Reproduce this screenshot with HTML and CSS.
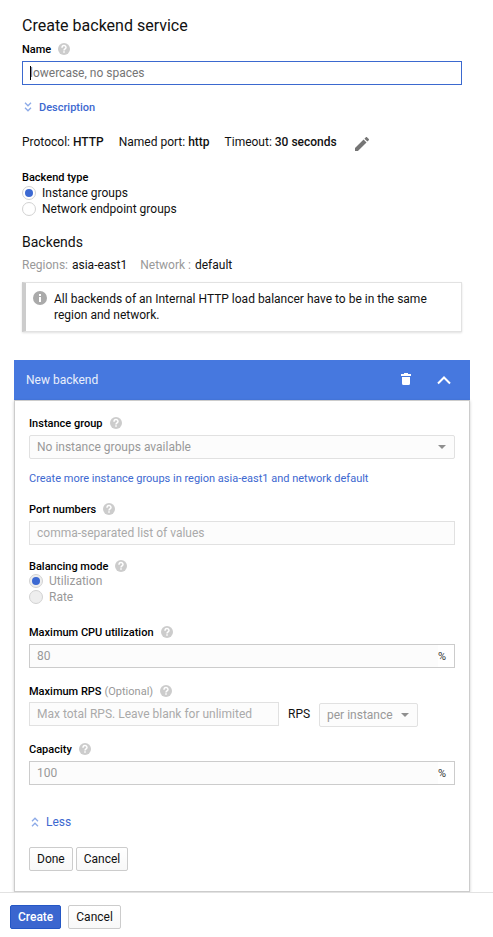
FILE: index.html
```html
<!DOCTYPE html>
<html lang="en">
<head>
<meta charset="utf-8">
<title>Create backend service</title>
<link rel="stylesheet" href="styles.css">
</head>
<body>
<svg class="defs" width="0" height="0" aria-hidden="true">
  <symbol id="help" viewBox="0 0 12 12"><circle cx="6" cy="6" r="6"/><path d="M4 4.700C4 1.900 8 1.900 8 4.500C8 5.800 6 5.900 6 7.400M6 8.300v1.500" fill="none" stroke="#fff" stroke-width="1.500"/></symbol>
</svg>
<main class="page">
  <h1 class="title">Create backend service</h1>
  <div class="label">Name <svg class="help"><use href="#help"/></svg></div>
  <div class="field focused"><span class="caret"></span>lowercase, no spaces</div>
  <a class="toggle description"><svg class="chevrons" viewBox="0 0 8 10"><path d="M1 .8l3 3 3-3M1 5.800l3 3 3-3"/></svg>Description</a>
  <div class="summary">
    <span>Protocol: <b>HTTP</b></span>
    <span>Named port: <b>http</b></span>
    <span>Timeout: <b>30 seconds</b></span>
    <svg class="pencil" viewBox="3 3 18 18"><path d="M3 17.250V21h3.750L17.810 9.940l-3.750-3.750L3 17.250zM20.710 7.040c.39-.39.39-1.020 0-1.410l-2.340-2.340c-.39-.39-1.020-.39-1.410 0l-1.830 1.830 3.750 3.750 1.830-1.830z"/></svg>
  </div>
  <div class="label">Backend type</div>
  <div class="option"><i class="radio on"></i>Instance groups</div>
  <div class="option"><i class="radio"></i>Network endpoint groups</div>
  <h2 class="subtitle">Backends</h2>
  <div class="scope"><span class="muted">Regions:</span><span class="region">asia-east1</span><span class="muted">Network :</span><span>default</span></div>
  <div class="notice">
    <svg class="info" viewBox="0 0 14 14"><circle cx="7" cy="7" r="7"/><path d="M6 3h2v2H6zM6 6h2v5H6z"/></svg>
    <p>All backends of an Internal HTTP load balancer have to be in the same region and network.</p>
  </div>
</main>
<section class="card">
  <header class="card-head">
    <span class="card-title">New backend</span>
    <svg class="trash" viewBox="0 0 10 12"><path d="M0 1h3V0h4v1h3v2H0zM1 4h8v6.500Q9 12 7.500 12h-5Q1 12 1 10.500z"/></svg>
    <svg class="collapse" viewBox="0 0 14 9"><path d="M1 7.500l6-6 6 6"/></svg>
  </header>
  <div class="card-body">
    <div class="label">Instance group <svg class="help"><use href="#help"/></svg></div>
    <div class="field off select">No instance groups available<i class="arrow"></i></div>
    <a class="link">Create more instance groups in region asia-east1 and network default</a>
    <div class="label">Port numbers <svg class="help"><use href="#help"/></svg></div>
    <div class="field off hint">comma-separated list of values</div>
    <div class="label balancing">Balancing mode <svg class="help"><use href="#help"/></svg></div>
    <div class="option disabled"><i class="radio on"></i>Utilization</div>
    <div class="option disabled"><i class="radio"></i>Rate</div>
    <div class="label cpu">Maximum CPU utilization <svg class="help"><use href="#help"/></svg></div>
    <div class="field number"><span class="value">80</span><span class="unit">%</span></div>
    <div class="label rps">Maximum RPS <span class="optional">(Optional)</span> <svg class="help"><use href="#help"/></svg></div>
    <div class="rps-row">
      <div class="field off hint rps-input">Max total RPS. Leave blank for unlimited</div>
      <span class="rps-unit">RPS</span>
      <div class="field off select per">per instance<i class="arrow"></i></div>
    </div>
    <div class="label capacity">Capacity <svg class="help"><use href="#help"/></svg></div>
    <div class="field number"><span class="value">100</span><span class="unit">%</span></div>
    <a class="toggle less"><svg class="chevrons" viewBox="0 0 8 10"><path d="M1 4.200l3-3 3 3M1 9.200l3-3 3 3"/></svg>Less</a>
    <div class="actions"><button class="btn">Done</button><button class="btn">Cancel</button></div>
  </div>
</section>
<footer class="footer"><button class="btn primary">Create</button><button class="btn">Cancel</button></footer>
</body>
</html>
```

FILE: styles.css
```css
* { box-sizing: border-box; }
body {
  margin: 0;
  height: 937px;
  overflow: hidden;
  background: #fff;
  color: #111;
  font: 12px/16px Roboto, "Liberation Sans", sans-serif;
}
.defs { display: none; }
svg { flex: none; }
.page { height: 360px; padding: 16px 31px 0 22px; }
.title { margin: 0 0 5px; font-size: 16px; line-height: 20px; font-weight: 400; }
.subtitle { margin: 15px 0 5px; font-size: 14px; line-height: 20px; font-weight: 400; }
b { font-weight: 500; }
.label { display: flex; align-items: center; height: 16px; padding-top: 1px; color: #000; font-size: 11px; line-height: 16px; font-weight: 500; }
.help { width: 12px; height: 12px; margin: -1px 0 0 7px; fill: #ccc; }
.field {
  display: flex;
  align-items: center;
  height: 24px;
  margin-top: 4px;
  padding: 0 7px;
  border: 1px solid #ccc;
  white-space: nowrap;
}
.focused { position: relative; border-color: #3b69cf; color: #757575; }
.caret { position: absolute; left: 7px; top: 4px; width: 1px; height: 14px; background: #000; }
.toggle { display: flex; align-items: center; color: #3d68d0; }
.chevrons { width: 8px; height: 10px; fill: none; stroke: #8caae8; stroke-width: 1.3; }
.description { margin: 15px 0 18px; padding-left: 2px; gap: 7px; font-size: 11px; font-weight: 500; }
.description .chevrons { margin-bottom: 3px; }
.summary { display: flex; align-items: center; height: 16px; margin-bottom: 19px; gap: 15px; }
.pencil { width: 14px; height: 14px; margin: 3px 0 0 3px; fill: #757575; }
.option { display: flex; align-items: center; height: 16px; gap: 6px; }
.radio { display: flex; flex: none; align-items: center; justify-content: center; width: 14px; height: 14px; border: 1px solid #d2d2d2; border-radius: 50%; }
.radio.on::after { content: ""; width: 8px; height: 8px; border-radius: 50%; background: #3c69d2; }
.disabled { color: #999; }
.disabled .radio { background: #eee; }
.scope { display: flex; gap: 4px; }
.region { margin-right: 9px; }
.muted { color: #999; }
.notice {
  display: flex;
  height: 50px;
  margin-top: 9px;
  padding: 8px 20px 0 7px;
  gap: 7px;
  border: 1px solid #e2e2e2;
  border-left: 4px solid #ccc;
  box-shadow: 0 1px 2px rgba(0,0,0,.12);
}
.notice p { margin: 0; }
.info { width: 14px; height: 14px; }
.info circle { fill: #aaa; }
.info path { fill: #fff; }
.card { width: 456px; height: 532px; margin-left: 14px; }
.card-head { display: flex; align-items: center; height: 40px; padding: 0 19px 0 12px; background: #4678df; color: #e9effb; }
.card-title { flex: 1; }
.trash { width: 10px; height: 12px; margin: 0 26px 2px 0; fill: #fff; }
.collapse { width: 14px; height: 9px; fill: none; stroke: #fff; stroke-width: 2; }
.card-body { height: 492px; padding: 14px 14px 0; border: 1px solid #ccc; box-shadow: 0 1px 3px rgba(0,0,0,.2); }
.off { border-color: #e1e1e1; background: #fcfcfc; color: #999; }
.hint { color: #aaa; }
.select { border-radius: 2px; justify-content: space-between; }
.arrow { margin-right: 1px; border: 4px solid transparent; border-top-color: #8f8f8f; border-bottom: 0; }
.link { display: block; margin: 12px 0 14px; font-size: 11px; color: #3d68d0; }
.balancing { margin-top: 13px; margin-bottom: -1px; }
.cpu { margin-top: 19px; }
.number { padding: 0; justify-content: space-between; color: #999; }
.value { flex: 1; line-height: 22px; padding-left: 7px; background: #fcfcfc; }
.unit { width: 16px; font-size: 11px; line-height: 22px; padding-top: 1px; height: 22px; color: #333; }
.rps { margin-top: 15px; }
.optional { margin-left: 3px; color: #999; font-weight: 400; }
.rps-row { display: flex; height: 25px; margin-top: 3px; }
.rps-row .field { margin-top: 0; }
.rps-input { width: 250px; }
.rps-unit { width: 40px; padding-left: 9px; line-height: 24px; }
.rps-row .per { width: 99px; margin-top: 1px; }
.capacity { margin-top: 14px; }
.less { margin-top: 29px; padding-left: 2px; gap: 7px; }
.actions { display: flex; gap: 3px; margin-top: 17px; }
.btn { height: 24px; padding: 0 7px; border: 1px solid #ccc; border-radius: 2px; background: linear-gradient(#fff, #f8f8f8); color: #111; font: inherit; }
.primary { border-color: #2457c5; background: #3b66cf; color: #fff; font-weight: 500; }
.footer { position: relative; display: flex; height: 45px; padding: 12px 10px 0; gap: 7px; border-top: 1px solid #e2e2e2; background: #fff; }
```
